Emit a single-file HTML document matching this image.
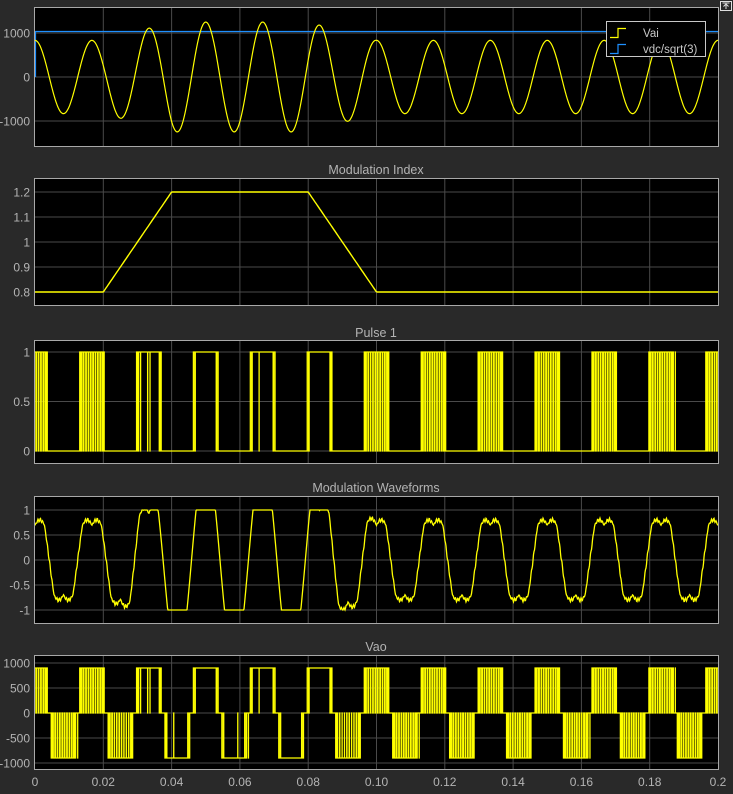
<!DOCTYPE html>
<html><head><meta charset="utf-8"><style>
html,body{margin:0;padding:0;background:#292929;}
svg{display:block;}
text{font-family:"Liberation Sans",sans-serif;font-size:12px;fill:#b4b4b4;}
</style></head><body>
<svg id="s" width="733" height="794" xmlns="http://www.w3.org/2000/svg"></svg>
<script>
(function(){
var s=document.getElementById('s'),h='';
var X0=35,X1=718,W=X1-X0;
function xt(t){return X0+t/0.2*W;}
var plots=[
 {t:8,b:146,f:function(v){return 77-v*0.044;},ticks:[[1000,'1000'],[0,'0'],[-1000,'-1000']]},
 {t:179,b:305,f:function(v){return 292-(v-0.8)*250;},ticks:[[1.2,'1.2'],[1.1,'1.1'],[1,'1'],[0.9,'0.9'],[0.8,'0.8']],title:'Modulation Index',ty:174},
 {t:341,b:463,f:function(v){return 451-v*99;},ticks:[[1,'1'],[0.5,'0.5'],[0,'0']],title:'Pulse 1',ty:337},
 {t:497,b:623,f:function(v){return 560-v*50;},ticks:[[1,'1'],[0.5,'0.5'],[0,'0'],[-0.5,'-0.5'],[-1,'-1']],title:'Modulation Waveforms',ty:492},
 {t:656,b:769,f:function(v){return 713-v*0.05;},ticks:[[1000,'1000'],[500,'500'],[0,'0'],[-500,'-500'],[-1000,'-1000']],title:'Vao',ty:651}
];
function m(t){if(t<0.02)return 0.8;if(t<0.04)return 0.8+(t-0.02)/0.02*0.4;if(t<0.08)return 1.2;if(t<0.1)return 1.2-(t-0.08)/0.02*0.4;return 0.8;}
var w=2*Math.PI*60;
function u(t){var M=m(t),th=w*t;var a=M*Math.cos(th),b=M*Math.cos(th-2.0944),c=M*Math.cos(th+2.0944);
 var off=-(Math.max(a,b,c)+Math.min(a,b,c))/2;var v=(a+off)*1.1547;
 v+=0.04*Math.sin(th*24)*Math.abs(Math.sin(th*3))*(M<1.1?1:0);
 return Math.max(-1,Math.min(1,v));}
var fc=1440;
function tri(t){var p=(t*fc)%1;return p<0.5?2*p:2-2*p;}
plots.forEach(function(p){
 h+='<rect x="'+X0+'" y="'+p.t+'" width="'+W+'" height="'+(p.b-p.t)+'" fill="#000"/>';
 for(var k=1;k<10;k++){var x=xt(k*0.02).toFixed(1);h+='<line x1="'+x+'" y1="'+p.t+'" x2="'+x+'" y2="'+p.b+'" stroke="#4a4a4a" stroke-width="1"/>';}
 p.ticks.forEach(function(tk){var y=p.f(tk[0]).toFixed(1);h+='<line x1="'+X0+'" y1="'+y+'" x2="'+X1+'" y2="'+y+'" stroke="#4a4a4a" stroke-width="1"/>';
  h+='<text x="30" y="'+(+y+4.5)+'" text-anchor="end">'+tk[1]+'</text>';});
 if(p.title)h+='<text x="376" y="'+p.ty+'" text-anchor="middle" style="font-size:12.5px">'+p.title+'</text>';
});
function path(d,c,sw){return '<path d="'+d+'" fill="none" stroke="'+c+'" stroke-width="'+(sw||1.3)+'"/>';}
// plot1
var p=plots[0],d='M35 '+p.f(1050).toFixed(1)+'L718 '+p.f(1050).toFixed(1);
h+=path('M35.5 77L35.5 31.5L718 31.5','#1e90ff',1.2);
d='';for(var x=X0;x<=X1;x+=0.5){var t=(x-X0)/W*0.2;var v=m(t)*1040*Math.cos(w*t);d+=(d?'L':'M')+x+' '+p.f(v).toFixed(1);}
h+=path(d,'#ffff00',1.2);
// plot2
p=plots[1];d='';for(var x=X0;x<=X1;x+=1){var t=(x-X0)/W*0.2;d+=(d?'L':'M')+x+' '+p.f(m(t)).toFixed(1);}
h+=path(d,'#ffff00',1.4);
// plot4
p=plots[3];d='';for(var x=X0;x<=X1;x+=0.5){var t=(x-X0)/W*0.2;d+=(d?'L':'M')+x+' '+p.f(u(t)).toFixed(1);}
h+=path(d,'#ffff00',1.3);
// pwm
var N=40000,s1=null,s5=null,d3='',d5='';
for(var i=0;i<=N;i++){var t=i/N*0.2,x=xt(t).toFixed(2),uu=u(t),c=tri(t);
 var a=uu>c?1:0;var v=a?900:(uu< -c?-900:0);
 if(s1===null){d3='M'+x+' '+plots[2].f(a).toFixed(1);}else if(a!==s1){d3+='L'+x+' '+plots[2].f(s1).toFixed(1)+'L'+x+' '+plots[2].f(a).toFixed(1);}
 if(s5===null){d5='M'+x+' '+plots[4].f(v).toFixed(1);}else if(v!==s5){d5+='L'+x+' '+plots[4].f(s5).toFixed(1)+'L'+x+' '+plots[4].f(v).toFixed(1);}
 s1=a;s5=v;}
d3+='L718 '+plots[2].f(s1).toFixed(1);d5+='L718 '+plots[4].f(s5).toFixed(1);
h+=path(d3,'#ffff00',1.3);h+=path(d5,'#ffff00',1.3);
plots.forEach(function(p){h+='<rect x="'+(X0-0.5)+'" y="'+(p.t-0.5)+'" width="'+(W+1)+'" height="'+(p.b-p.t+1)+'" fill="none" stroke="#a8a8a8" stroke-width="1"/>';});
for(var k=0;k<=10;k++){var lab=k==0?'0':(k==10?'0.2':(k*0.02).toFixed(2));h+='<text x="'+xt(k*0.02).toFixed(1)+'" y="786" text-anchor="middle">'+lab+'</text>';}
// legend
h+='<rect x="606.5" y="21.5" width="99" height="35" fill="#000" stroke="#c8c8c8" stroke-width="1"/>';
h+=path('M610 37.5H618V28.5H626','#ffff00',1.2);
h+=path('M610 53.5H618V44.5H626','#1e90ff',1.2);
h+='<text x="643" y="37" style="font-size:11.5px;fill:#c8c8c8">Vai</text>';
h+='<text x="643" y="53" style="font-size:11.5px;fill:#c8c8c8">vdc/sqrt(3)</text>';
h+='<rect x="720.5" y="1.5" width="11" height="9" fill="none" stroke="#e0e0e0" stroke-width="1"/>';
h+=path('M726 9V4M723.5 6.5L726 4L728.5 6.5M722.5 3H729.5','#e0e0e0',1);
s.innerHTML=h;
})();
</script>
</body></html>
